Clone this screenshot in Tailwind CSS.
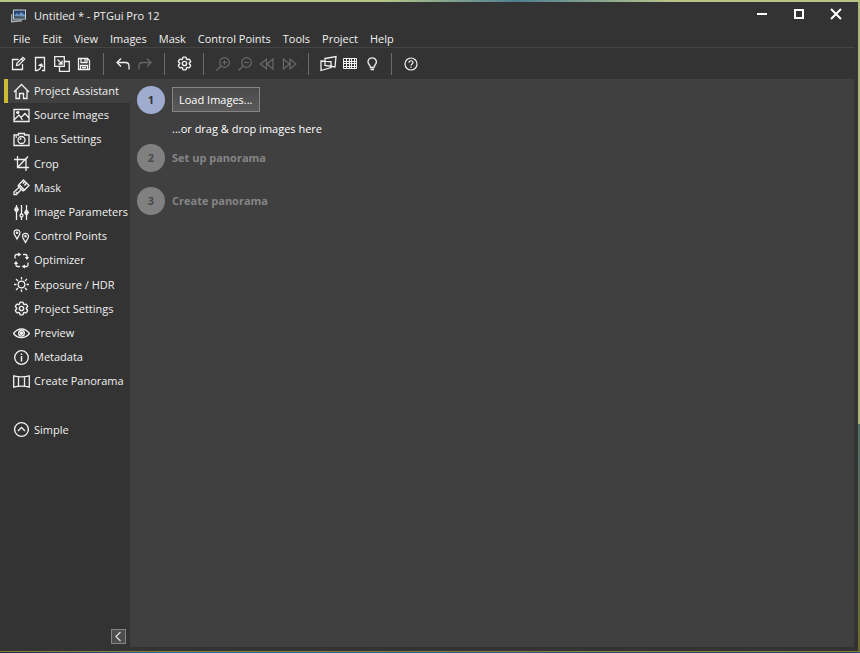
<!DOCTYPE html>
<html lang="en">
<head>
  <meta charset="UTF-8" />
  <meta name="viewport" content="width=device-width, initial-scale=1.0" />
  <title>Untitled * - PTGui Pro 12</title>
  <script src="https://cdn.jsdelivr.net/npm/@tailwindcss/browser@4"></script>
</head>
<body class="min-h-screen flex flex-col bg-[#333333] text-[#f0f0f0] font-['Open_Sans','Noto_Sans',sans-serif] text-[11px] leading-4">

  <!-- shared icon shapes -->
  <svg class="hidden">
    <symbol id="gear" viewBox="0 0 24 24">
      <path fill="none" stroke="currentColor" stroke-width="2" d="M9.594 3.94c.09-.542.56-.94 1.11-.94h2.593c.55 0 1.02.398 1.11.94l.213 1.281c.063.374.313.686.645.87.074.04.147.083.22.127.325.196.72.257 1.075.124l1.217-.456a1.125 1.125 0 0 1 1.37.49l1.296 2.247a1.125 1.125 0 0 1-.26 1.431l-1.003.827c-.293.241-.438.613-.43.992a7.723 7.723 0 0 1 0 .255c-.008.378.137.75.43.991l1.004.827c.424.35.534.955.26 1.43l-1.298 2.247a1.125 1.125 0 0 1-1.369.491l-1.217-.456c-.355-.133-.75-.072-1.076.124a6.47 6.47 0 0 1-.22.128c-.331.183-.581.495-.644.869l-.213 1.281c-.09.543-.56.94-1.11.94h-2.594c-.55 0-1.019-.398-1.11-.94l-.213-1.281c-.062-.374-.312-.686-.644-.87a6.52 6.52 0 0 1-.22-.127c-.325-.196-.72-.257-1.076-.124l-1.217.456a1.125 1.125 0 0 1-1.369-.49l-1.297-2.247a1.125 1.125 0 0 1 .26-1.431l1.004-.827c.292-.24.437-.613.43-.991a6.932 6.932 0 0 1 0-.255c.007-.38-.138-.751-.43-.992l-1.004-.827a1.125 1.125 0 0 1-.26-1.43l1.297-2.247a1.125 1.125 0 0 1 1.37-.491l1.216.456c.356.133.751.072 1.076-.124.072-.044.146-.086.22-.128.332-.183.582-.495.644-.869l.214-1.28Z"/>
      <circle cx="12" cy="12" r="3" fill="none" stroke="currentColor" stroke-width="2"/>
    </symbol>
  </svg>

  <div class="h-[2px] bg-linear-to-r from-[#b4c486] from-45% via-[#4f7f90] via-60% to-[#b9c488] to-78%"></div>

  <div class="flex-1 flex">
    <div class="flex-1 flex flex-col">

      <header>
        <div class="h-7 flex items-center pl-[10px] pr-1">
          <svg class="size-4 mr-2" viewBox="0 0 16 16">
            <path d="M1 6.500l11-1v8l-11 1z" fill="#a9b0b5"/>
            <path d="M2 5l11-1v8l-11 1z" fill="#5f666c"/>
            <path d="M3 1.500h13v10H3z" fill="#c4ccd2"/>
            <path d="M4 2.500h11v8H4z" fill="#26466f"/>
            <path d="M4 8l3-3 2 2 2-3 4 3v2z" fill="#6f97c0"/>
            <path d="M4 8.500h11v2H4z" fill="#4b5a5e"/>
          </svg>
          <h1 class="flex-1">Untitled * - PTGui Pro 12</h1>
          <button aria-label="Minimize" class="w-[37px] h-6 flex items-center justify-center">
            <svg class="size-3 mb-1" viewBox="0 0 12 12"><path d="M1 6h10" stroke="#fff" stroke-width="2"/></svg>
          </button>
          <button aria-label="Maximize" class="w-[37px] h-6 flex items-center justify-center">
            <svg class="size-3 mb-1" viewBox="0 0 12 12"><path d="M2 2h8v8H2z" fill="none" stroke="#fff" stroke-width="2"/></svg>
          </button>
          <button aria-label="Close" class="w-[37px] h-6 flex items-center justify-center">
            <svg class="size-3 mb-1" viewBox="0 0 12 12"><path d="M1 1l10 10M11 1L1 11" stroke="#fff" stroke-width="2"/></svg>
          </button>
        </div>

        <div class="h-[18px] flex items-end gap-3 pl-[13px] mr-1 border-b border-[#444444]">
          <button>File</button>
          <button>Edit</button>
          <button>View</button>
          <button>Images</button>
          <button>Mask</button>
          <button>Control Points</button>
          <button>Tools</button>
          <button>Project</button>
          <button>Help</button>
        </div>

        <div class="h-[31px] flex items-center gap-2 pl-[7px]">
          <div class="flex">
            <button aria-label="New project" class="w-[22px] h-6 flex items-center justify-center">
              <svg class="size-4" viewBox="0 0 16 16" fill="none" stroke="currentColor" stroke-width="1.3"><path d="M8.500 3.500H2.500v10h10V8M6.500 9.500l.4-2.200 6-6 1.800 1.800-6 6zM6.500 9.500l1-1M11.500 3l1.700 1.700"/></svg>
            </button>
            <button aria-label="Open project" class="w-[22px] h-6 flex items-center justify-center">
              <svg class="size-4" viewBox="0 0 16 16" fill="none" stroke="currentColor" stroke-width="1.3"><path d="M5 14.500H3.500v-13h9v13H10M5 14.500c2.500-.500 4-2.500 4.500-6M6.500 9.500l3-1.500 1.500 3"/></svg>
            </button>
            <button aria-label="Apply template" class="w-[22px] h-6 flex items-center justify-center">
              <svg class="size-4" viewBox="0 0 16 16" fill="none" stroke="currentColor" stroke-width="1.3"><path d="M5.500 10.300H.7V.7h9.600v4.800h5v9.800H5.500V10M3.500 3.500l4 4M8 4.500V8H4.500M10.300 5.500v4.800H5.500"/></svg>
            </button>
            <button aria-label="Save project" class="w-[22px] h-6 flex items-center justify-center">
              <svg class="size-4" viewBox="0 0 16 16" fill="none" stroke="currentColor" stroke-width="1.3"><path d="M2.500 2.500h9l2 2v9h-11zM5 2.500v4h6v-4M9 3v2.500M4.500 13.500v-4h7v4M6 11.500h4"/></svg>
            </button>
          </div>
          <div class="w-px h-[22px] bg-[#6a6a6a]"></div>
          <div class="flex">
            <button aria-label="Undo" class="w-[22px] h-6 flex items-center justify-center">
              <svg class="size-4" viewBox="0 0 16 16" fill="none" stroke="currentColor" stroke-width="1.3"><path d="M6 2.500L2 6.500l4 4M2 6.500h8.500c2.500 0 3.500 1.500 3.500 3.500v3.500"/></svg>
            </button>
            <button aria-label="Redo" disabled class="w-[22px] h-6 flex items-center justify-center text-[#666666]">
              <svg class="size-4" viewBox="0 0 16 16" fill="none" stroke="currentColor" stroke-width="1.3"><path d="M10 2.500l4 4-4 4M14 6.500H5.500C3 6.500 2 8 2 10v3.500"/></svg>
            </button>
          </div>
          <div class="w-px h-[22px] bg-[#6a6a6a]"></div>
          <button aria-label="Options" class="w-[22px] h-6 flex items-center justify-center"><svg class="size-[17px]"><use href="#gear"/></svg></button>
          <div class="w-px h-[22px] bg-[#6a6a6a]"></div>
          <div class="flex text-[#6a6a6a]">
            <button aria-label="Zoom in" disabled class="w-[22px] h-6 flex items-center justify-center">
              <svg class="size-4" viewBox="0 0 16 16" fill="none" stroke="currentColor" stroke-width="1.2"><circle cx="9.500" cy="6.500" r="4.800"/><path d="M6 10l-4.500 4.500M9.500 4.200v4.600M7.200 6.500h4.600"/></svg>
            </button>
            <button aria-label="Zoom out" disabled class="w-[22px] h-6 flex items-center justify-center">
              <svg class="size-4" viewBox="0 0 16 16" fill="none" stroke="currentColor" stroke-width="1.2"><circle cx="9.500" cy="6.500" r="4.800"/><path d="M6 10l-4.500 4.500M7.200 6.500h4.600"/></svg>
            </button>
            <button aria-label="Previous" disabled class="w-[22px] h-6 flex items-center justify-center">
              <svg class="size-4" viewBox="0 0 16 16" fill="none" stroke="currentColor" stroke-width="1.2"><path d="M7.500 3v10L1.500 8zM14 3v10L8 8z"/></svg>
            </button>
            <button aria-label="Next" disabled class="w-[22px] h-6 flex items-center justify-center">
              <svg class="size-4" viewBox="0 0 16 16" fill="none" stroke="currentColor" stroke-width="1.2"><path d="M2.500 3v10l6-5zM9 3v10l6-5z"/></svg>
            </button>
          </div>
          <div class="w-px h-[22px] bg-[#6a6a6a]"></div>
          <div class="flex">
            <button aria-label="Panorama editor" class="w-[22px] h-6 flex items-center justify-center">
              <svg class="size-[17px]" viewBox="0 0 17 17" fill="none" stroke="currentColor" stroke-width="1.3"><path d="M1 6l10 .500v6L1 15.500zM5 3.500l11-2-1 10.500-10-1.500z"/></svg>
            </button>
            <button aria-label="Numerical transform" class="w-[22px] h-6 flex items-center justify-center">
              <svg class="size-4" viewBox="0 0 16 16" fill="none" stroke="currentColor" stroke-width="1"><path d="M1.500 2.500h13v10h-13zM1.500 5.500h13M1.500 7.500h13M1.500 10.500h13M4.500 2.500v10M7.500 2.500v10M9.500 2.500v10M12.500 2.500v10"/></svg>
            </button>
            <button aria-label="Hints" class="w-[22px] h-6 flex items-center justify-center">
              <svg class="size-4" viewBox="0 0 16 16" fill="none" stroke="currentColor" stroke-width="1.3"><path d="M6.500 11.500C6.500 9 4 8.500 4 6a4.200 4.200 0 0 1 8.400 0c0 2.500-2.400 3-2.400 5.500zM6.500 13.500h3.500"/></svg>
            </button>
          </div>
          <div class="w-px h-[22px] bg-[#6a6a6a]"></div>
          <button aria-label="Help" class="w-[22px] h-6 flex items-center justify-center">
            <svg class="size-4" viewBox="0 0 16 16" fill="none" stroke="currentColor" stroke-width="1.2"><circle cx="8" cy="8" r="6"/><path d="M6 6.700C6 4 10 4.200 10 6.600 10 8 8 8 8 9.500M8 10.500v1.300"/></svg>
          </button>
        </div>
      </header>

      <div class="flex-1 flex">
        <aside class="w-[130px] flex flex-col justify-between">
          <nav class="h-[363px] grid auto-rows-fr ml-1 whitespace-nowrap">
            <a href="#" class="flex items-center gap-1 pl-[5px] border-l-4 border-[#cdbb38] bg-[#404040]">
              <svg class="size-[17px]" viewBox="0 0 17 17" fill="none" stroke="currentColor" stroke-width="1.300"><path d="M1 9l7.500-7.500L16 9M3 7.500v8h3.500v-5h4v5H14v-8"/></svg>
              Project Assistant
            </a>
            <a href="#" class="flex items-center gap-1 pl-[9px]">
              <svg class="size-[17px]" viewBox="0 0 17 17" fill="none" stroke="currentColor" stroke-width="1.300"><path d="M1 2.500h15v12H1zM1 13l5-5 3.500 5M8 10.500l4-4 4 4.500M3 5.500l3 .500"/><circle cx="5" cy="5.500" r=".8"/></svg>
              Source Images
            </a>
            <a href="#" class="flex items-center gap-1 pl-[9px]">
              <svg class="size-[17px]" viewBox="0 0 17 17" fill="none" stroke="currentColor" stroke-width="1.300"><path d="M1 4h4.500V2.500h6V4H16v10.500H1z"/><circle cx="8.500" cy="9" r="3.500"/><path d="M7 9a1.500 1.500 0 0 1 1.500-1.500M2.500 6H4"/></svg>
              Lens Settings
            </a>
            <a href="#" class="flex items-center gap-1 pl-[9px]">
              <svg class="size-[17px]" viewBox="0 0 17 17" fill="none" stroke="currentColor" stroke-width="1.300"><path d="M4.500 1v11.500H16M1 4.500h12V16M4.500 12.500L15 1.500"/></svg>
              Crop
            </a>
            <a href="#" class="flex items-center gap-1 pl-[9px]">
              <svg class="size-[17px]" viewBox="0 0 17 17" fill="none" stroke="currentColor" stroke-width="1.300"><path d="M10.500 1L16 6.500l-4.500 4.500L6 5.500zM7.500 7L1 13v2.500h2.500L9.500 9M6 5.500L5 7l5 5 1.500-1"/><path d="M11.500 2.500l-1.500 2M13.500 4l-2 2.500M3 13l1 1" stroke-width="1.500"/></svg>
              Mask
            </a>
            <a href="#" class="flex items-center gap-1 pl-[9px]">
              <svg class="size-[17px]" viewBox="0 0 17 17" fill="none" stroke="currentColor" stroke-width="1.300"><path d="M3.500 1v3M3.500 7v9M8.500 1v9M8.500 13v3M13.500 1v6M13.500 10v6M1 5.500h5M11 8.500h5"/><circle cx="8.500" cy="11.500" r="1.500"/><path d="M2.500 4h2v3h-2zM12.500 7h2v3h-2z"/></svg>
              Image Parameters
            </a>
            <a href="#" class="flex items-center gap-1 pl-[9px]">
              <svg class="size-[17px]" viewBox="0 0 17 17" fill="none" stroke="currentColor" stroke-width="1.200"><path d="M4 11C3 8.500 1 7 1 4.800a3 3 0 0 1 6 0C7 7 5 8.500 4 11zM12.500 14.500c-1-2.500-3-4-3-6.200a3 3 0 0 1 6 0c0 2.200-2 3.700-3 6.200z"/><circle cx="4" cy="4.800" r=".7"/><circle cx="12.500" cy="8.300" r=".7"/></svg>
              Control Points
            </a>
            <a href="#" class="flex items-center gap-1 pl-[9px]">
              <svg class="size-[17px]" viewBox="0 0 17 17" fill="none" stroke="currentColor" stroke-width="1.300"><path d="M2 6.500V4q0-1.500 1.500-1.500H6M10 2.500h2.500Q14 2.500 14 4v2M15 10.500V13q0 1.500-1.500 1.500H11M7 14.500H4.500Q3 14.500 3 13v-2"/><path d="M5 .5l3.500 2L5 4.500zM11.800 5h4.400L14 8zM12 12.500v4l-3.500-2zM.8 12h4.400L3 9z" fill="currentColor" stroke="none"/></svg>
              Optimizer
            </a>
            <a href="#" class="flex items-center gap-1 pl-[9px]">
              <svg class="size-[17px]" viewBox="0 0 17 17" fill="none" stroke="currentColor" stroke-width="1.300"><circle cx="8.500" cy="8.500" r="3.300"/><path d="M8.500 1v2.500M8.500 13.500V16M1 8.500h2.500M13.500 8.500H16M3 3l2 2M12 12l2 2M14 3l-2 2M5 12l-2 2"/></svg>
              Exposure / HDR
            </a>
            <a href="#" class="flex items-center gap-1 pl-[9px]">
              <svg class="size-[17px]"><use href="#gear"/></svg>
              Project Settings
            </a>
            <a href="#" class="flex items-center gap-1 pl-[9px]">
              <svg class="size-[17px]" viewBox="0 0 17 17" fill="none" stroke="currentColor" stroke-width="1.400"><path d="M.5 8.500C5 2.500 12 2.500 16.500 8.500 12 14 5 14 .5 8.500z"/><circle cx="8.500" cy="8.300" r="2.800"/><circle cx="8.500" cy="8.300" r="1" fill="currentColor"/></svg>
              Preview
            </a>
            <a href="#" class="flex items-center gap-1 pl-[9px]">
              <svg class="size-[17px]" viewBox="0 0 17 17" fill="none" stroke="currentColor" stroke-width="1.300"><circle cx="8.500" cy="8.500" r="6.800"/><path d="M8.500 4.500V6M8.500 7v5.500" stroke-width="1.500"/></svg>
              Metadata
            </a>
            <a href="#" class="flex items-center gap-1 pl-[9px]">
              <svg class="size-[17px]" viewBox="0 0 17 17" fill="none" stroke="currentColor" stroke-width="1.300"><path d="M.7 2.800q7.800 2 15.600 0v11.400q-7.800-2-15.600 0zM5.500 3.800v9.400M11.500 3.800v9.400"/></svg>
              Create Panorama
            </a>
            <a href="#" class="row-start-15 flex items-center gap-1 pl-[9px]">
              <svg class="size-[17px]" viewBox="0 0 17 17" fill="none" stroke="currentColor" stroke-width="1.400"><circle cx="8.500" cy="8.500" r="6.900"/><path d="M5 10l3.500-3.500L12 10"/></svg>
              Simple
            </a>
          </nav>
          <button aria-label="Collapse sidebar" class="self-end mr-1 mb-[7px] size-[15px] flex items-center justify-center border border-[#858585] bg-[#4d4d4d]">
            <svg class="size-[11px]" viewBox="0 0 11 11" fill="none" stroke="#dddddd" stroke-width="1.200"><path d="M7.500 1L3 5.500 7.500 10"/></svg>
          </button>
        </aside>

        <main class="flex-1 mr-1 mb-1 bg-[#404040] pl-[7px] pt-[7px]">
          <ol>
            <li class="flex gap-[7px]">
              <span class="size-7 shrink-0 rounded-full bg-[#a0abd0] text-[#333333] font-bold flex items-center justify-center">1</span>
              <div>
                <button class="h-[25px] mt-px px-[6px] border border-[#858585] bg-linear-to-b from-[#4a4a4a] to-[#5a5a5a] text-white">Load Images...</button>
                <p class="mt-[9px] text-white">...or drag &amp; drop images here</p>
              </div>
            </li>
            <li class="mt-[7px] flex items-center gap-[7px] font-bold text-[#858585]">
              <span class="size-7 rounded-full bg-[#808080] text-[#4a4a4a] flex items-center justify-center">2</span>
              Set up panorama
            </li>
            <li class="mt-[15px] flex items-center gap-[7px] font-bold text-[#858585]">
              <span class="size-7 rounded-full bg-[#808080] text-[#4a4a4a] flex items-center justify-center">3</span>
              Create panorama
            </li>
          </ol>
        </main>
      </div>
    </div>
    <!-- desktop showing past the window edge -->
    <div class="w-[2px] bg-linear-to-b from-[#a9b87c] from-65% via-[#4f7068] via-65% to-[#6e6a2c]"></div>
  </div>

  <div class="h-[2px] border-t border-[#8a8030] bg-linear-to-r from-[#1c2a55] via-[#2f66b0] via-20% to-[#23436e]"></div>
</body>
</html>
